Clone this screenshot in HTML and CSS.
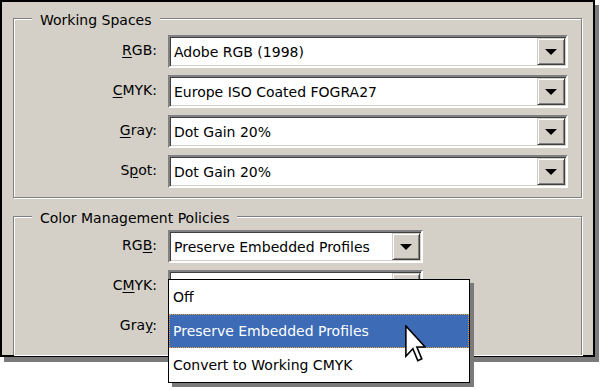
FILE: index.html
```html
<!DOCTYPE html>
<html lang="en">

<head>
    <meta charset="UTF-8">
    <title>Color Settings</title>
    <link rel="stylesheet" href="styles.css">
</head>

<body>

    <div class="screen">

        <div class="window">

            <!-- Working spaces group -->
            <fieldset class="group">
                <legend>Working Spaces</legend>
                <div class="rows">
                    <span class="label"><u>R</u>GB:</span>
                    <div class="combo"><span class="value">Adobe RGB (1998)</span><span class="drop-btn"></span></div>

                    <span class="label"><u>C</u>MYK:</span>
                    <div class="combo"><span class="value">Europe ISO Coated FOGRA27</span><span class="drop-btn"></span></div>

                    <span class="label"><u>G</u>ray:</span>
                    <div class="combo"><span class="value">Dot Gain 20%</span><span class="drop-btn"></span></div>

                    <span class="label">S<u>p</u>ot:</span>
                    <div class="combo"><span class="value">Dot Gain 20%</span><span class="drop-btn"></span></div>
                </div>
            </fieldset>

            <!-- Policies group, cut off at the bottom of the window -->
            <fieldset class="group group-open">
                <legend>Color Management Policies</legend>
                <div class="rows rows-short">
                    <span class="label">RG<u>B</u>:</span>
                    <div class="combo"><span class="value">Preserve Embedded Profiles</span><span class="drop-btn"></span></div>

                    <span class="label">C<u>M</u>YK:</span>
                    <div class="combo"><span class="value"></span><span class="drop-btn"></span></div>

                    <span class="label">Gra<u>y</u>:</span>
                    <div class="combo"><span class="value"></span><span class="drop-btn"></span></div>
                </div>
            </fieldset>

        </div>

        <!-- Open list for the CMYK policy, drawn over the dialog -->
        <div class="droplist">
            <div class="item">Off</div>
            <div class="item selected">Preserve Embedded Profiles</div>
            <div class="item">Convert to Working CMYK</div>
            <svg class="cursor" viewBox="0 0 12 19.5" preserveAspectRatio="none">
                <path d="M0.5 0.5 L0.5 16.5 L4.5 12.5 L7.3 18.8 L9.6 17.8 L6.8 11.6 L11.5 11.6 Z" fill="#fff" stroke="#000" stroke-width="0.9" />
            </svg>
        </div>

    </div>

</body>

</html>
```

FILE: styles.css
```css
* {
    box-sizing: border-box;
}

body {
    margin: 0;
    background-color: #fff;
    font-family: "DejaVu Sans", Verdana, sans-serif;
    font-size: 14px;
    color: #000;
}

.screen {
    position: relative;
    width: 600px;
    height: 390px;
}

/* Dialog window with hard drop shadow */
.window {
    width: 595px;
    height: 357px;
    border: 2px solid #000;
    background-color: #d4d0c8;
    padding: 6px 11px 0;
    box-shadow: 4px 5px 0 #7a7a7a;
    display: flex;
    flex-direction: column;
    gap: 8px;
}

/* Etched group box */
.group {
    margin: 0;
    padding: 6px 0 9px;
    min-width: 0;
    border: 1px solid #808080;
    box-shadow: inset 1px 1px 0 #fff, 1px 1px 0 #fff;
}

.group legend {
    margin-left: 18px;
    padding: 4px 8px 0;
    line-height: 17px;
    background-color: #d4d0c8;
}

.group-open {
    flex: 1;
    border-bottom: none;
    padding-top: 3px;
}

.rows {
    display: grid;
    grid-template-columns: 143px 400px;
    column-gap: 11px;
    row-gap: 7px;
    align-items: center;
}

.rows-short {
    grid-template-columns: 143px 255px;
}

.label {
    text-align: right;
    margin-top: -3px;
}

.label u {
    text-underline-offset: 2px;
}

/* Sunken combo box */
.combo {
    height: 33px;
    display: flex;
    align-items: center;
    background-color: #fff;
    border: 2px solid;
    border-color: #808080 #fff #fff #808080;
    box-shadow: inset 1px 1px 0 #404040, inset -1px -1px 0 #d4d0c8;
}

.combo .value {
    flex: 1;
    padding-left: 4px;
    white-space: nowrap;
}

.drop-btn {
    width: 28px;
    align-self: stretch;
    margin: 1px 1px 1px 0;
    background-color: #d4d0c8;
    border: 1px solid;
    border-color: #d4d0c8 #404040 #404040 #d4d0c8;
    box-shadow: inset 1px 1px 0 #fff, inset -1px -1px 0 #808080;
    display: flex;
    justify-content: center;
    align-items: center;
}

.drop-btn::after {
    content: "";
    border-left: 6px solid transparent;
    border-right: 6px solid transparent;
    border-top: 6px solid #000;
}

/* Open drop-down list */
.droplist {
    position: absolute;
    left: 168px;
    top: 279px;
    width: 302px;
    background-color: #fff;
    border: 1px solid #000;
    box-shadow: 4px 4px 0 #7a7a7a;
}

.droplist .item {
    height: 34px;
    line-height: 32px;
    padding-left: 3px;
    border: 1px solid transparent;
    white-space: nowrap;
}

.droplist .selected {
    background-color: #3d6bb6;
    color: #fff;
    border: 1px dotted #e0a030;
}

.cursor {
    position: absolute;
    left: 236px;
    top: 45px;
    width: 21px;
    height: 37px;
}
```
